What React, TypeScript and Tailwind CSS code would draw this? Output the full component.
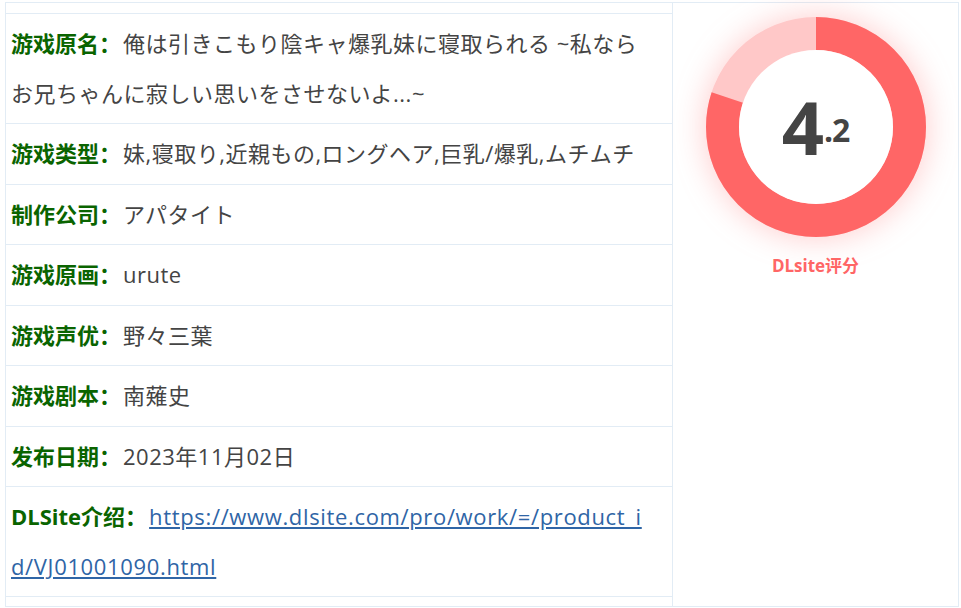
import * as React from "react";

const rows: { label: string; value: string; link?: boolean }[] = [
  {
    label: "游戏原名",
    value:
      "俺は引きこもり陰キャ爆乳妹に寝取られる ~私ならお兄ちゃんに寂しい思いをさせないよ...~",
  },
  { label: "游戏类型", value: "妹,寝取り,近親もの,ロングヘア,巨乳/爆乳,ムチムチ" },
  { label: "制作公司", value: "アパタイト" },
  { label: "游戏原画", value: "urute" },
  { label: "游戏声优", value: "野々三葉" },
  { label: "游戏剧本", value: "南薙史" },
  { label: "发布日期", value: "2023年11月02日" },
  {
    label: "DLSite介绍",
    value: "https://www.dlsite.com/pro/work/=/product_id/VJ01001090.html",
    link: true,
  },
];

function ScoreRing({ score }: { score: number }) {
  const r = 93.5;
  const c = 2 * Math.PI * r;
  const filled = c * 0.8;

  return (
    <div className="relative h-[220px] w-[220px]">
      <svg
        width="220"
        height="220"
        viewBox="0 0 220 220"
        className="drop-shadow-[0_0_16px_rgba(255,102,102,0.35)]"
      >
        <circle cx="110" cy="110" r={r} fill="none" stroke="#ffc8c8" strokeWidth="33" />
        <circle
          cx="110"
          cy="110"
          r={r}
          fill="none"
          stroke="#ff6666"
          strokeWidth="33"
          strokeDasharray={`${filled} ${c}`}
          transform="rotate(-90 110 110)"
        />
        <circle cx="110" cy="110" r="77" fill="#ffffff" />
      </svg>
      <div className="absolute inset-0 flex items-center justify-center font-['Open_Sans',sans-serif] font-bold text-[#444]">
        <span className="text-[74px] leading-none">{Math.floor(score)}</span>
        <span className="mt-[6px] text-[32px] leading-none tracking-[-1px]">
          .{Math.round((score % 1) * 10)}
        </span>
      </div>
    </div>
  );
}

export default function App() {
  return (
    <div className="min-h-[608px] w-[961px] bg-white pl-[5px] pt-[2px]">
      <div className="flex w-[954px] border border-[#e2ecf5]">
        <div className="w-[667px] border-r border-[#e2ecf5] pb-[9px] pt-[10px]">
          <div className="border-t border-[#e2ecf5]">
            {rows.map((row) => (
              <div
                key={row.label}
                className="border-b border-[#e2ecf5] py-[5px] pl-[5px] pr-[18px] text-[22px] leading-[49.5px]"
              >
                <span className="mr-[2px] font-['Open_Sans','Noto_Sans_CJK_SC',sans-serif] font-bold text-[#0a6400]">
                  {row.label}：
                </span>
                {row.link ? (
                  <a
                    href={row.value}
                    className="break-all font-['Open_Sans','Noto_Sans_CJK_JP',sans-serif] tracking-[0.65px] text-[#2f65a6] underline"
                  >
                    {row.value}
                  </a>
                ) : (
                  <span className="font-['Open_Sans','Noto_Sans_CJK_JP',sans-serif] tracking-[0.5px] text-[#444]">
                    {row.value}
                  </span>
                )}
              </div>
            ))}
          </div>
        </div>
        <div className="flex w-[285px] flex-col items-center pt-[14px]">
          <ScoreRing score={4.2} />
          <div className="mt-[16px] font-['Open_Sans','Noto_Sans_CJK_SC',sans-serif] text-[17px] font-bold text-[#ff6666]">
            DLsite评分
          </div>
        </div>
      </div>
    </div>
  );
}
